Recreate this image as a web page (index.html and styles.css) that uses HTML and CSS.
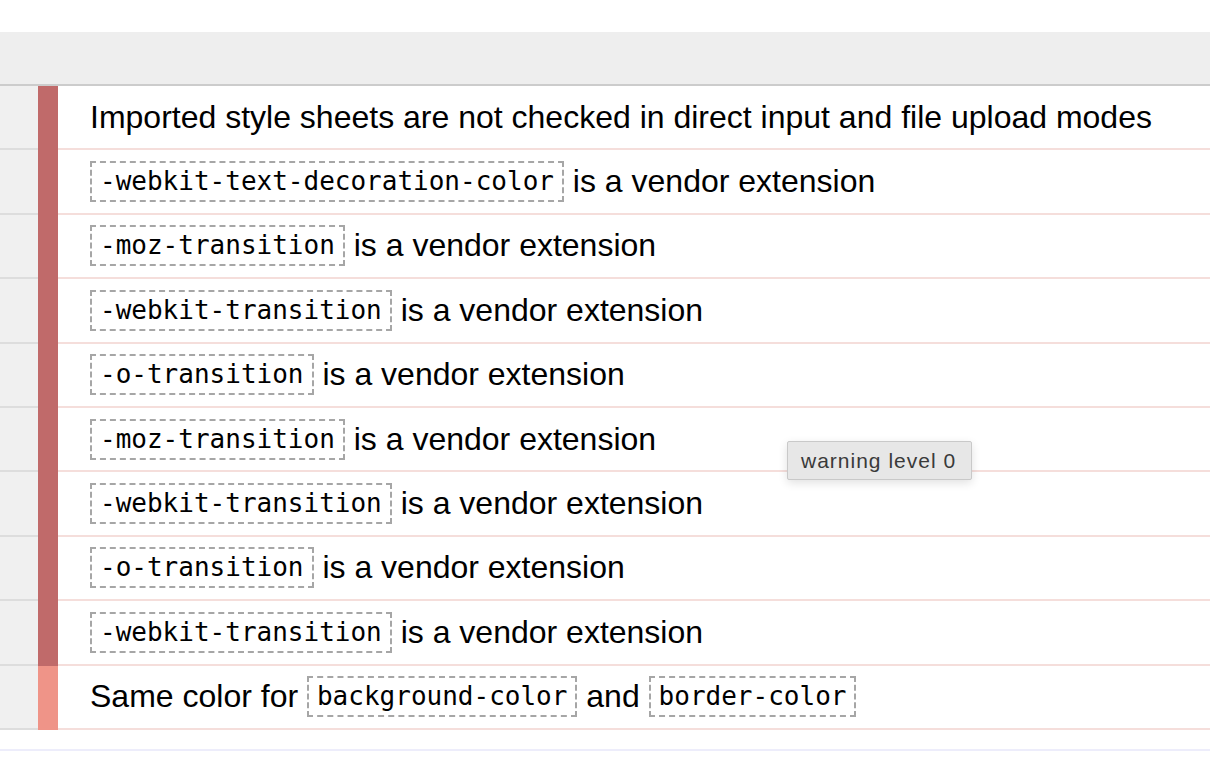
FILE: index.html
```html
<!DOCTYPE html>
<html>
<head>
<meta charset="utf-8">
<link rel="stylesheet" href="styles.css">
</head>
<body>
<div class="page">
  <div class="header"></div>
  <div class="list">
    <div class="row"><div class="gutter"></div><div class="bar"></div><div class="msg">Imported style sheets are not checked in direct input and file upload modes</div></div>
    <div class="row"><div class="gutter"></div><div class="bar"></div><div class="msg"><code>-webkit-text-decoration-color</code> is a vendor extension</div></div>
    <div class="row"><div class="gutter"></div><div class="bar"></div><div class="msg"><code>-moz-transition</code> is a vendor extension</div></div>
    <div class="row"><div class="gutter"></div><div class="bar"></div><div class="msg"><code>-webkit-transition</code> is a vendor extension</div></div>
    <div class="row"><div class="gutter"></div><div class="bar"></div><div class="msg"><code>-o-transition</code> is a vendor extension</div></div>
    <div class="row"><div class="gutter"></div><div class="bar"></div><div class="msg"><code>-moz-transition</code> is a vendor extension</div></div>
    <div class="row"><div class="gutter"></div><div class="bar"></div><div class="msg"><code>-webkit-transition</code> is a vendor extension</div></div>
    <div class="row"><div class="gutter"></div><div class="bar"></div><div class="msg"><code>-o-transition</code> is a vendor extension</div></div>
    <div class="row"><div class="gutter"></div><div class="bar"></div><div class="msg"><code>-webkit-transition</code> is a vendor extension</div></div>
    <div class="row"><div class="gutter"></div><div class="bar bar-light"></div><div class="msg">Same color for <code>background-color</code> and <code>border-color</code></div></div>
  </div>
  <div class="footer"></div>
  <div class="tooltip">warning level 0</div>
</div>
</body>
</html>
```
FILE: styles.css
```css
html, body {
  margin: 0;
  padding: 0;
  background: #ffffff;
}
.page {
  position: relative;
  width: 1210px;
  height: 772px;
  overflow: hidden;
  font-family: "Liberation Sans", Arial, sans-serif;
  color: #000;
}
.header {
  margin-top: 32px;
  height: 52px;
  background: #eeeeee;
  border-bottom: 2px solid #cccccc;
}
.row {
  display: flex;
  height: 64.4px;
}
.gutter {
  width: 38px;
  flex: none;
  background: #f0f0f0;
  border-bottom: 2px solid #dddddd;
  box-sizing: border-box;
}
.bar {
  width: 20px;
  flex: none;
  background: #c06a6a;
}
.bar-light {
  background: #ef9488;
}
.msg {
  flex: 1;
  display: flex;
  align-items: center;
  padding-left: 32px;
  font-size: 32px;
  white-space: pre;
  border-bottom: 2px solid #f5dedb;
  box-sizing: border-box;
}
code {
  font-family: "DejaVu Sans Mono", monospace;
  font-size: 26px;
  line-height: 31px;
  padding: 3px 8px;
  border: 2px dashed #a6a6a6;
}
.footer {
  margin-top: 19px;
  border-top: 2px solid #ededfb;
}
.tooltip {
  position: absolute;
  left: 787px;
  top: 441px;
  width: 185px;
  height: 39px;
  box-sizing: border-box;
  background: #e7e7e7;
  border: 1px solid #c9c9c9;
  border-radius: 2px;
  box-shadow: 0 3px 10px rgba(0,0,0,0.12);
  font-family: "Liberation Sans", Arial, sans-serif;
  font-size: 21px;
  letter-spacing: 1px;
  color: #3a3a3a;
  display: flex;
  align-items: center;
  padding-left: 13px;
}
```
